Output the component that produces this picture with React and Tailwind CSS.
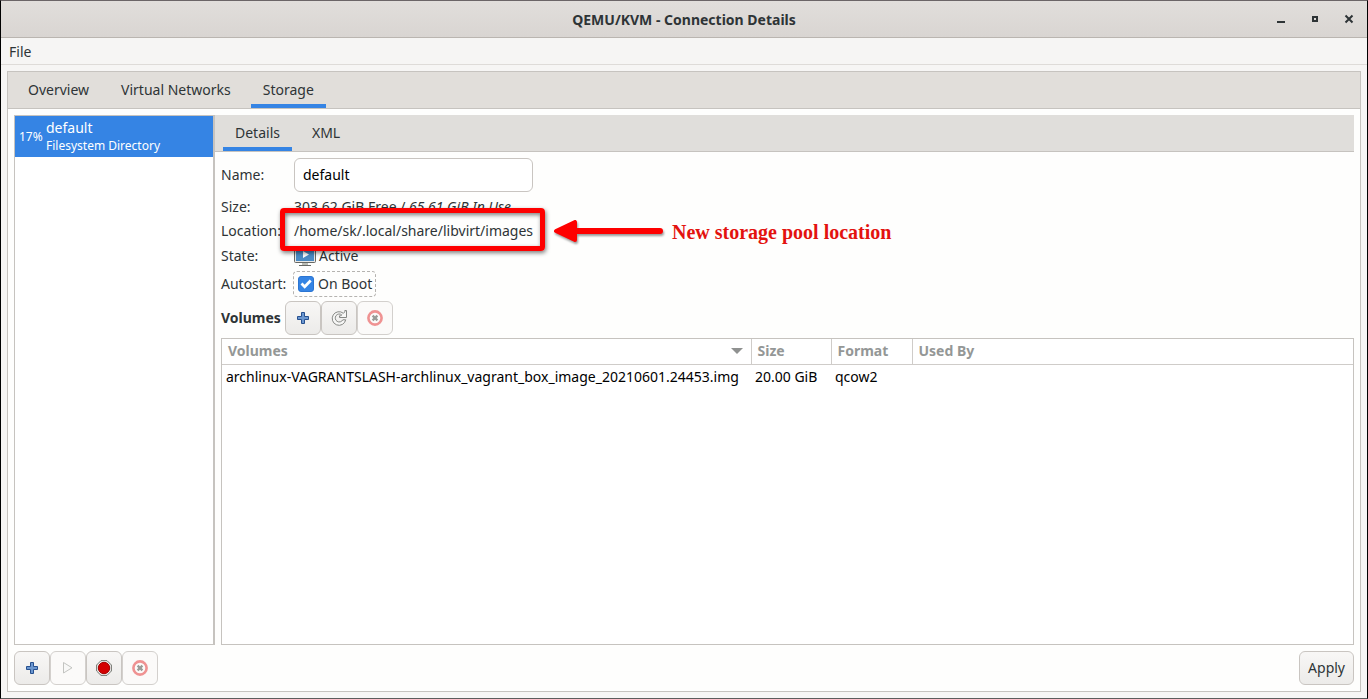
import { useState } from "react";

const TABS = ["Overview", "Virtual Networks", "Storage"];
const POOL_TABS = ["Details", "XML"];

const VOLUMES = [
  { name: "archlinux-VAGRANTSLASH-archlinux_vagrant_box_image_20210601.24453.img", size: "20.00 GiB", format: "qcow2", usedBy: "" },
];

// ── Icons ─────────────────────────────────────────────────────────────────
function AddIcon() {
  return (
    <svg width="16" height="16" viewBox="0 0 16 16" aria-hidden="true">
      <path d="M6.5 2.5h3v4h4v3h-4v4h-3v-4h-4v-3h4z" fill="#6b97d0" stroke="#27508f" strokeLinejoin="round" />
    </svg>
  );
}

function RefreshIcon() {
  return (
    <svg width="18" height="18" viewBox="0 0 18 18" aria-hidden="true">
      <path
        d="M13.4 4.300 14.800 2.900V1.500h1.700v7H9.500V6.800h1.400l.9-.9A4 4 0 1 0 12.800 10.800h2.900A6.800 6.800 0 1 1 13.400 4.300z"
        fill="#f7f7f6" stroke="#868885" strokeLinejoin="round"
      />
    </svg>
  );
}

function DeleteIcon() {
  return (
    <svg width="16" height="16" viewBox="0 0 16 16" fill="none" aria-hidden="true">
      <circle cx="8" cy="8" r="6.6" stroke="#ef9292" strokeWidth="2.6" />
      <path d="M5.600 5.600 10.400 10.400M10.400 5.600 5.600 10.400" stroke="#999b97" strokeWidth="2.200" />
    </svg>
  );
}

function StartIcon() {
  return (
    <svg width="16" height="16" viewBox="0 0 16 16" aria-hidden="true">
      <path d="M3.500 2.500v10.500l8.500-5.200z" fill="#f8f8f7" stroke="#c3c4c1" strokeLinejoin="round" />
    </svg>
  );
}

function StopIcon() {
  return (
    <svg width="16" height="16" viewBox="0 0 16 16" aria-hidden="true">
      <path d="M5 .6h6L15.400 5v6L11 15.400H5L.6 11V5z" fill="#eeeeec" stroke="#73756f" />
      <circle cx="8" cy="8" r="5.700" fill="#d40000" stroke="#a40000" />
    </svg>
  );
}

function MonitorIcon() {
  return (
    <svg width="22" height="20" viewBox="0 0 22 20" aria-hidden="true">
      <rect x=".5" y="1.500" width="21" height="14" rx="1" fill="#e8e8e6" stroke="#666864" />
      <rect x="2" y="3" width="18" height="11" fill="#4a8bc4" />
      <path d="M9 4v7l6-3.500z" fill="#fff" />
      <path d="M8 16h6v2H8z" fill="#babdb6" />
      <path d="M5 18.500h12" stroke="#666864" />
    </svg>
  );
}

// ── Shared controls ───────────────────────────────────────────────────────
function TabButton({ active, children, ...props }) {
  return (
    <button
      role="tab"
      aria-selected={active}
      className={`border-b-4 px-3 pt-[3px] ${active ? "border-[#3584e4]" : "border-transparent"}`}
      {...props}
    >
      {children}
    </button>
  );
}

function ToolButton({ label, disabled, children }) {
  return (
    <button
      aria-label={label}
      disabled={disabled}
      className="flex h-[34px] w-9 items-center justify-center rounded-md border border-[#c9c5c1] bg-linear-to-b from-[#f8f7f6] to-[#ecebe9] disabled:border-[#d3d0cd] disabled:from-[#fbfaf9] disabled:to-[#fbfaf9]"
    >
      {children}
    </button>
  );
}

function TitleBar() {
  return (
    <header className="grid h-[37px] shrink-0 grid-cols-[1fr_auto_1fr] items-center border-b border-[#bab5b0] bg-linear-to-b from-[#e1dedb] to-[#d9d5d2]">
      <h1 className="col-start-2 pt-px text-sm font-bold">QEMU/KVM - Connection Details</h1>
      <div className="flex justify-end gap-[18px] pr-[10px]">
        <button aria-label="Minimize" className="size-4">
          <svg width="16" height="16" viewBox="0 0 16 16"><path d="M4 11h8" stroke="#2e3436" strokeWidth="2" /></svg>
        </button>
        <button aria-label="Maximize" className="size-4">
          <svg width="16" height="16" viewBox="0 0 16 16"><path d="M6 6h4v4H6z" fill="none" stroke="#2e3436" strokeWidth="2" /></svg>
        </button>
        <button aria-label="Close" className="size-4">
          <svg width="16" height="16" viewBox="0 0 16 16"><path d="m4.500 4.500 7 7m0-7-7 7" stroke="#2e3436" strokeWidth="2" /></svg>
        </button>
      </div>
    </header>
  );
}

function PoolList() {
  return (
    <aside className="w-[201px] shrink-0 border border-r-2 border-[#c6c3bf] bg-white">
      <button className="flex h-[41px] w-full items-center gap-1 bg-[#3584e4] pt-px pl-1 text-left text-white">
        <span className="w-[23px] text-xs">17%</span>
        <span>
          <span className="block text-sm leading-[18px]">default</span>
          <span className="block text-xs leading-[18px]">Filesystem Directory</span>
        </span>
      </button>
    </aside>
  );
}

function Annotation() {
  return (
    <>
      <div className="absolute -top-[11px] -left-[14px] h-[43px] w-[265px] rounded-sm border-[5px] border-[#fe0000] shadow-[1px_2px_4px_rgba(0,0,0,0.5),inset_1px_2px_4px_rgba(0,0,0,0.5)]" />
      <div className="absolute -top-px left-[259px] flex items-center gap-2">
        <svg width="111" height="26" viewBox="0 0 111 26" className="drop-shadow-[1px_2px_1px_rgba(0,0,0,0.4)]" aria-hidden="true">
          <path d="M3 12 22 3v18z" fill="#fe0000" stroke="#fe0000" strokeWidth="4" strokeLinejoin="round" />
          <path d="M22 12h85" stroke="#fe0000" strokeWidth="6" strokeLinecap="round" />
        </svg>
        <span className="font-['Liberation_Serif',serif] text-xl font-bold whitespace-nowrap text-[#e3120f]">
          New storage pool location
        </span>
      </div>
    </>
  );
}

function PoolDetails() {
  const [name, setName] = useState("default");
  const [autostart, setAutostart] = useState(true);

  return (
    <div className="grid grid-cols-[73px_1fr] items-center pt-[6px] pl-[6px]">
      <label htmlFor="pool-name" className="mb-[3px] h-[34px] leading-[34px]">Name:</label>
      <input
        id="pool-name"
        value={name}
        onChange={(e) => setName(e.target.value)}
        className="mb-[3px] h-[34px] w-[239px] rounded-md border border-[#c9c5c1] bg-white px-2 pb-[2px] text-black outline-none"
      />
      <span className="h-6 leading-6">Size:</span>
      <span className="h-6 leading-6">303.62 GiB Free / <i>65.61 GiB In Use</i></span>
      <span className="h-6 leading-6">Location:</span>
      <span className="relative z-10 h-6 leading-6">
        /home/sk/.local/share/libvirt/images
        <Annotation />
      </span>
      <span className="h-7 leading-[26px]">State:</span>
      <span className="flex h-7 items-start gap-[3px] leading-[26px]"><span className="pt-1"><MonitorIcon /></span>Active</span>
      <label htmlFor="autostart">Autostart:</label>
      <label className="-ml-px flex h-[26px] w-fit items-center gap-1 rounded-sm border border-dashed border-[#b5b3b0] pr-[3px] pl-1">
        <input
          id="autostart"
          type="checkbox"
          checked={autostart}
          onChange={(e) => setAutostart(e.target.checked)}
          className="peer sr-only"
        />
        <svg width="16" height="16" viewBox="0 0 16 16" aria-hidden="true">
          <rect x=".5" y=".5" width="15" height="15" rx="2.500" fill={autostart ? "#3584e4" : "#fff"} stroke="#2b75d2" />
          {autostart && <path d="m3.500 7.500 3.200 3.200 6-6.200" fill="none" stroke="#fff" strokeWidth="2.800" />}
        </svg>
        On Boot
      </label>
    </div>
  );
}

function VolumeTable() {
  return (
    <div className="mt-[3px] ml-[6px] flex-1 border border-[#c6c3bf] bg-white">
      <table className="w-full table-fixed text-left">
        <thead>
          <tr className="h-[25px] border-b border-[#cfccc9] leading-[18px] text-[#949796]">
            <th className="w-[529px] border-r border-[#cfccc9] px-[6px]">
              <span className="flex items-center justify-between">
                Volumes
                <svg width="16" height="8" viewBox="0 0 16 8" aria-hidden="true"><path d="M2 1h12L8 7z" fill="#8f9190" /></svg>
              </span>
            </th>
            <th className="w-20 border-r border-[#cfccc9] px-[6px]">Size</th>
            <th className="w-[81px] border-r border-[#cfccc9] px-[6px]">Format</th>
            <th className="px-[6px]">Used By</th>
          </tr>
        </thead>
        <tbody className="text-black">
          {VOLUMES.map((v) => (
            <tr key={v.name} className="h-[26px] whitespace-nowrap">
              <td className="px-1">{v.name}</td>
              <td className="px-1">{v.size}</td>
              <td className="px-1">{v.format}</td>
              <td className="px-1">{v.usedBy}</td>
            </tr>
          ))}
        </tbody>
      </table>
    </div>
  );
}

export default function App() {
  const [tab, setTab] = useState(2);
  const [poolTab, setPoolTab] = useState(0);

  return (
    <div className="flex min-h-screen flex-col border border-t-[#6b6567] border-r-black border-b-[#5c5c5c] border-l-black bg-[#f6f5f4] font-['Noto_Sans',sans-serif] text-sm text-[#2e3436]">
      <TitleBar />
      <nav className="flex h-[27px] shrink-0 items-center border-b border-[#dedbd8] px-2 pt-px">
        <button>File</button>
      </nav>

      <main className="m-[6px] flex flex-1 flex-col border border-[#c6c3bf] bg-[#fefefd]">
        {/* ── Tabs ── */}
        <div role="tablist" className="flex h-[37px] shrink-0 gap-2 border-b border-[#c6c3bf] bg-[#e1deda] pl-2">
          {TABS.map((t, i) => (
            <TabButton key={t} active={tab === i} onClick={() => setTab(i)}>{t}</TabButton>
          ))}
        </div>

        <div className="flex flex-1 flex-col p-[6px]">
          <div className="flex flex-1">
            <PoolList />
            <section className="flex min-w-0 flex-1 flex-col">
              <div role="tablist" className="flex h-[37px] shrink-0 gap-2 border-b border-[#c6c3bf] bg-[#e0dedb] pl-2">
                {POOL_TABS.map((t, i) => (
                  <TabButton key={t} active={poolTab === i} onClick={() => setPoolTab(i)}>{t}</TabButton>
                ))}
              </div>
              <PoolDetails />
              <div className="mt-1 flex items-center pl-[6px]">
                <h2 className="w-16 font-bold">Volumes</h2>
                <ToolButton label="Add volume"><AddIcon /></ToolButton>
                <ToolButton label="Refresh volumes"><RefreshIcon /></ToolButton>
                <ToolButton label="Delete volume" disabled><DeleteIcon /></ToolButton>
              </div>
              <VolumeTable />
            </section>
          </div>

          {/* ── Pool actions ── */}
          <div className="mt-[6px] flex">
            <ToolButton label="Add pool"><AddIcon /></ToolButton>
            <ToolButton label="Start pool" disabled><StartIcon /></ToolButton>
            <ToolButton label="Stop pool"><StopIcon /></ToolButton>
            <ToolButton label="Delete pool" disabled><DeleteIcon /></ToolButton>
            <button className="ml-auto h-[34px] rounded-md border border-[#c9c5c1] bg-linear-to-b from-[#f8f7f6] to-[#ecebe9] px-2">
              Apply
            </button>
          </div>
        </div>
      </main>
    </div>
  );
}
